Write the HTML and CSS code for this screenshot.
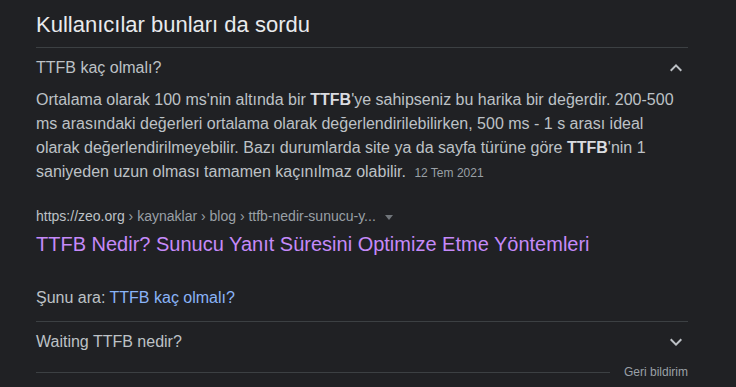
FILE: index.html
```html
<!DOCTYPE html>
<html lang="tr">

<head>
    <meta charset="UTF-8" />
    <meta name="viewport" content="width=device-width, initial-scale=1.0" />
    <title>Kullanıcılar bunları da sordu</title>
    <link rel="stylesheet" href="styles.css">
</head>

<body>

    <div class="paa">
        <div class="paa-header">
            <h2>Kullanıcılar bunları da sordu</h2>
        </div>

        <div class="question open">
            <div class="question-row">
                <span>TTFB kaç olmalı?</span>
                <svg class="chevron" viewBox="0 0 24 24" width="24" height="24">
                    <path d="M7.41 15.41L12 10.83l4.59 4.58L18 14l-6-6-6 6z" />
                </svg>
            </div>

            <div class="answer">
                Ortalama olarak 100 ms'nin altında bir <b>TTFB</b>'ye sahipseniz bu harika bir değerdir. 200-500
                ms arasındaki değerleri ortalama olarak değerlendirilebilirken, 500 ms - 1 s arası ideal
                olarak değerlendirilmeyebilir. Bazı durumlarda site ya da sayfa türüne göre <b>TTFB</b>'nin 1
                saniyeden uzun olması tamamen kaçınılmaz olabilir. <span class="date">12 Tem 2021</span>
            </div>

            <div class="source">
                <div class="crumbs">
                    <span class="domain">https://zeo.org</span> › kaynaklar › blog › ttfb-nedir-sunucu-y...
                    <span class="caret"></span>
                </div>
                <a class="result-title" href="#">TTFB Nedir? Sunucu Yanıt Süresini Optimize Etme Yöntemleri</a>
            </div>

            <div class="search-for">
                Şunu ara: <a href="#">TTFB kaç olmalı?</a>
            </div>
        </div>

        <div class="question last">
            <div class="question-row">
                <span>Waiting TTFB nedir?</span>
                <svg class="chevron" viewBox="0 0 24 24" width="24" height="24">
                    <path d="M16.59 8.59L12 13.17 7.41 8.59 6 10l6 6 6-6z" />
                </svg>
            </div>
        </div>

        <div class="feedback">
            <div class="feedback-line"></div>
            <a href="#">Geri bildirim</a>
        </div>
    </div>

</body>

</html>
```

FILE: styles.css
```css
body {
    margin: 0;
    padding: 0 48px 0 36px;
    background-color: #202124;
    font-family: "Liberation Sans", Arial, sans-serif;
    color: #bdc1c6;
}

a {
    text-decoration: none;
}

.paa {
    width: 652px;
}

.paa-header {
    padding: 11px 0 8px;
    border-bottom: 1px solid #3c4043;
}

.paa-header h2 {
    margin: 0;
    font-size: 22px;
    line-height: 28px;
    font-weight: normal;
    color: #e8eaed;
}

.question {
    border-bottom: 1px solid #3c4043;
}

.question.last {
    border-bottom: none;
}

.question-row {
    display: flex;
    justify-content: space-between;
    align-items: center;
    padding: 8px 0;
    font-size: 16px;
    line-height: 24px;
    color: #bdc1c6;
}

.question.last .question-row {
    padding-bottom: 9px;
}

.chevron {
    fill: #bdc1c6;
    flex-shrink: 0;
}

.answer {
    font-size: 16px;
    line-height: 24px;
    color: #bdc1c6;
}

.answer b {
    color: #dadce0;
}

.date {
    margin-left: 4px;
    font-size: 12px;
    color: #9aa0a6;
}

.source {
    margin-top: 20px;
}

.crumbs {
    font-size: 14px;
    line-height: 22px;
    color: #9aa0a6;
}

.domain {
    color: #bdc1c6;
}

.caret {
    display: inline-block;
    margin-left: 5px;
    vertical-align: middle;
    border-left: 4px solid transparent;
    border-right: 4px solid transparent;
    border-top: 5px solid #70757a;
}

.result-title {
    display: block;
    margin-top: 4px;
    font-size: 20px;
    line-height: 26px;
    color: #c58af9;
}

.search-for {
    padding: 29px 0 11px;
    font-size: 16px;
    line-height: 24px;
    color: #bdc1c6;
}

.search-for a {
    color: #8ab4f8;
}

.feedback {
    display: flex;
    align-items: center;
    height: 18px;
}

.feedback-line {
    flex: 1;
    height: 1px;
    margin: 0 14px 0 0;
    background-color: #3c4043;
}

.feedback a {
    font-size: 12px;
    line-height: 18px;
    color: #9aa0a6;
}
```
